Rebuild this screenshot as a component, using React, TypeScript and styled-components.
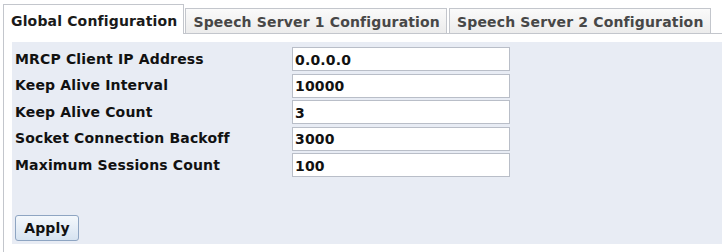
import React, { FC } from "react";
import styled, { createGlobalStyle } from "styled-components";

const GlobalStyle = createGlobalStyle`
  html, body {
    margin: 0;
    padding: 0;
    background: #ffffff;
    overflow: hidden;
  }
  body {
    font-family: "DejaVu Sans", Verdana, sans-serif;
    font-size: 14px;
    font-weight: bold;
    letter-spacing: 0.16px;
    color: #111;
  }
`;

const Page = styled.div`
  padding: 4px 0 0 3px;
`;

const TabList = styled.div`
  display: flex;
  align-items: flex-end;
  border-bottom: 1px solid #c3c6cc;
  height: 29px;
`;

const Tab = styled.div<{ $active?: boolean }>`
  box-sizing: border-box;
  display: flex;
  align-items: center;
  border: 1px solid #c3c6cc;
  border-bottom: none;
  margin-right: ${(p) => (p.$active ? "1px" : "2px")};
  height: ${(p) => (p.$active ? "30px" : "25px")};
  margin-bottom: ${(p) => (p.$active ? "-1px" : "0")};
  padding: ${(p) => (p.$active ? "2px 6px 0 7px" : "1px 6px 0 7px")};
  background: ${(p) =>
    p.$active ? "#ffffff" : "linear-gradient(#fafafa, #ececec)"};
  color: ${(p) => (p.$active ? "#1a1a1a" : "#474747")};
  white-space: nowrap;
  cursor: pointer;
`;

const Panel = styled.div`
  box-sizing: border-box;
  border-left: 1px solid #c3c6cc;
  padding: 8px 0 8px 8px;
  height: 218px;
`;

const Form = styled.div`
  box-sizing: border-box;
  height: 202px;
  background: #e8ecf4;
  padding: 5px 3px 3px;
  display: flex;
  flex-direction: column;
`;

const Fields = styled.div`
  display: grid;
  grid-template-columns: 277px 218px;
  row-gap: 2.5px;
  align-items: center;
`;

const Label = styled.label`
  color: #111;
  line-height: 17px;
`;

const Field = styled.input`
  box-sizing: border-box;
  height: 24px;
  width: 218px;
  margin: 0;
  padding: 1px 2px 0;
  border: 1px solid #b9bec8;
  background: #fff;
  font-family: "DejaVu Sans", Verdana, sans-serif;
  font-size: 14px;
  font-weight: bold;
  letter-spacing: 0.16px;
  color: #111;
  outline: none;
`;

const ApplyButton = styled.button`
  align-self: flex-start;
  margin-top: auto;
  box-sizing: border-box;
  width: 64px;
  height: 26px;
  border: 1px solid #8ea5c2;
  border-radius: 3px;
  background: linear-gradient(#f4f8fc, #d6e3f1);
  font-family: "DejaVu Sans", Verdana, sans-serif;
  font-size: 14px;
  font-weight: bold;
  letter-spacing: 0.16px;
  color: #111;
  padding: 0;
  cursor: pointer;
`;

const fields = [
  { label: "MRCP Client IP Address", value: "0.0.0.0" },
  { label: "Keep Alive Interval", value: "10000" },
  { label: "Keep Alive Count", value: "3" },
  { label: "Socket Connection Backoff", value: "3000" },
  { label: "Maximum Sessions Count", value: "100" },
];

const App: FC = () => {
  return (
    <Page>
      <GlobalStyle />
      <TabList>
        <Tab $active>Global Configuration</Tab>
        <Tab>Speech Server 1 Configuration</Tab>
        <Tab>Speech Server 2 Configuration</Tab>
      </TabList>
      <Panel>
        <Form>
          <Fields>
            {fields.map((f) => (
              <React.Fragment key={f.label}>
                <Label>{f.label}</Label>
                <Field defaultValue={f.value} />
              </React.Fragment>
            ))}
          </Fields>
          <ApplyButton>Apply</ApplyButton>
        </Form>
      </Panel>
    </Page>
  );
};

export default App;
